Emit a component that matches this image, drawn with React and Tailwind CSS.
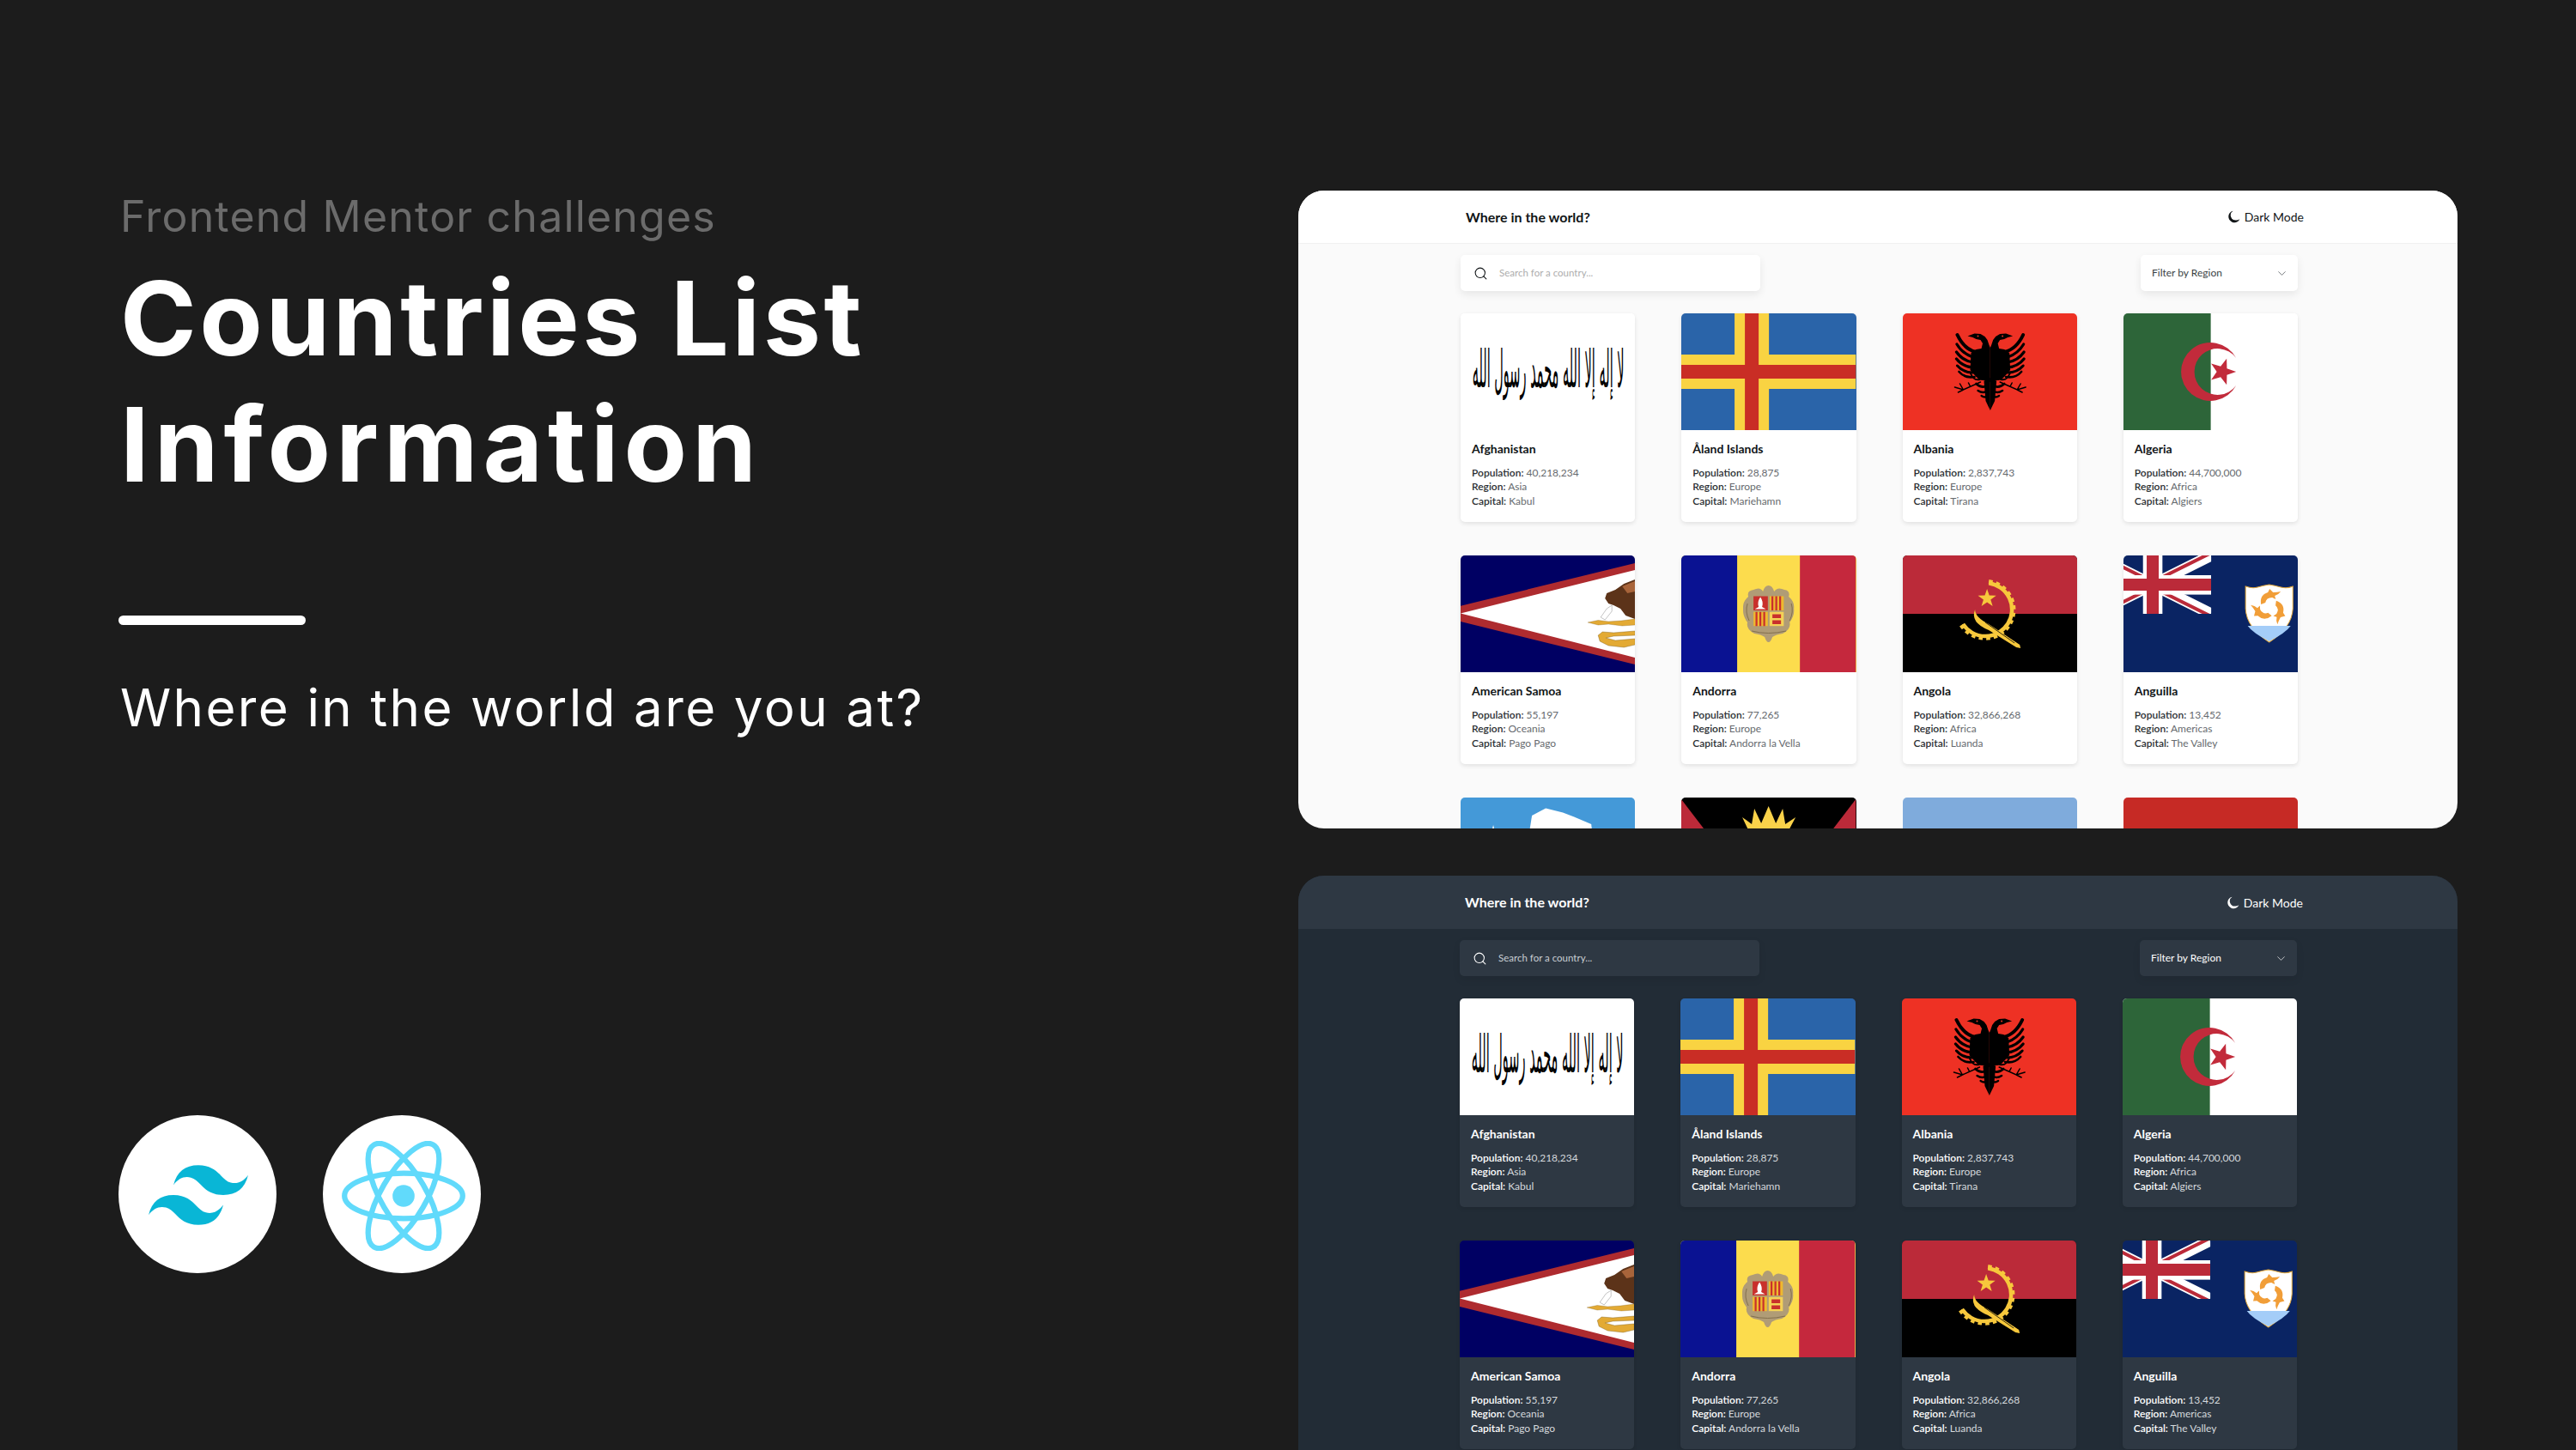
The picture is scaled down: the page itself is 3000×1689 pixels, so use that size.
import React from "react";
import { Search, ChevronDown } from "lucide-react";

const Svg = ({ children, bg }) => (
  <svg viewBox="0 0 203 136" preserveAspectRatio="none" className="block w-full h-[136px]" style={{ background: bg }}>
    {children}
  </svg>
);

const Afghanistan = () => (
  <Svg bg="#ffffff">
    <text fill="#000000" fontFamily="'DejaVu Sans', sans-serif" fontWeight="400" textAnchor="middle" fontSize="14.5" transform="translate(102 86) scale(1 4.2)" direction="rtl">لا إله إلا الله محمد رسول الله</text>
  </Svg>
);

const Aland = () => (
  <Svg bg="#2a64a9">
    <rect x="62" width="40" height="136" fill="#f9d342" />
    <rect y="48" width="203" height="40" fill="#f9d342" />
    <rect x="74" width="16" height="136" fill="#c92d25" />
    <rect y="60" width="203" height="16" fill="#c92d25" />
  </Svg>
);

const half = (
  <>
    <path d="M101.7 40 L103 37 L105 31 L108 27 L113 24 L120 23.5 L124 25 L128 26.5 L122 28 L118 30 L113 31 L110.5 35 L112 41 L118 42 L124 46 L125 66 L118 74 L110 78 L101.7 80 Z" fill="#000" />
    <circle cx="116" cy="26.5" r="1" fill="#ee3124" />
    <g fill="none" stroke="#000" strokeLinecap="round">
      <path d="M118 45 Q132 42 140 25" strokeWidth="4" />
      <path d="M122 51 Q134 47 140.5 36" strokeWidth="3.2" />
      <path d="M122 57 Q134 55 141 45" strokeWidth="3.2" />
      <path d="M122 63 Q134 62 141 53" strokeWidth="3.2" />
      <path d="M122 69 Q133 69 140 61" strokeWidth="3" />
      <path d="M120 74 Q131 76 138 68" strokeWidth="2.6" />
      <path d="M114 77 Q121 79 125 69" strokeWidth="2" />
      <path d="M110 77 Q116 78 119 68" strokeWidth="2" />
      <path d="M104 84 Q112 88 118 82" strokeWidth="2.6" />
      <path d="M104 90 Q110 94 116 90" strokeWidth="2.4" />
      <path d="M104 96 Q108 99 112 96" strokeWidth="2.2" />
      <path d="M113 80 L133 89 L143 86 M133 89 L137 82 M133 89 L139 92 M125 85 L127 81" strokeWidth="1.5" />
    </g>
    <path d="M101.7 75 L109 79 L107 102 L101.7 113 Z" fill="#000" />
  </>
);

const Albania = () => (
  <Svg bg="#ee3124">
    {half}
    <g transform="translate(203.4 0) scale(-1 1)">{half}</g>
  </Svg>
);

const Algeria = () => (
  <Svg bg="#ffffff">
    <rect width="101.5" height="136" fill="#2d6539" />
    <path d="M131 52 A34 34 0 1 0 131 84 A26.9 26.9 0 1 1 131 52 Z" fill="#c22b3b" />
    <polygon points="131,68 120.3,71.8 120,83.2 113,74.2 102,77.4 108.5,68 102,58.6 113,61.8 120,52.8 120.3,64.2" fill="#c22b3b" />
  </Svg>
);

const Samoa = () => (
  <Svg bg="#000063">
    <polygon points="0,58.7 203,9 203,127 0,77" fill="#ae2b2f" />
    <polygon points="0,67.5 203,17 203,119" fill="#ffffff" />
    <path d="M203 28 L190 33 L180 40 L170 44 L168 50 L172 56 L178 58 L186 62 L192 70 L203 74 Z" fill="#5c3319" />
    <path d="M188 36 L200 31 L203 30 L203 42 L194 44 Z" fill="#a8643a" />
    <path d="M176 58 L170 62 L163 72 L168 75 L176 65 Z" fill="#ffffff" stroke="#888888" strokeWidth="0.5" />
    <path d="M148 78 L160 75.5 L172 77 L187 76 L203 74 L203 81 L188 82 L172 80 L160 81 Z" fill="#e3aa34" stroke="#7a5a18" strokeWidth="0.3" />
    <path d="M203 88 L178 90 L165 89 L160 93 L162 100 L172 105 L190 107 L203 104 L203 97 L180 99 L169 96 L178 94 L203 93 Z" fill="#e3aa34" stroke="#7a5a18" strokeWidth="0.4" />
  </Svg>
);

const Andorra = () => (
  <Svg bg="#fcdc4d">
    <rect width="65" height="136" fill="#0a1292" />
    <rect x="138" width="65" height="136" fill="#c5283d" />
    <path d="M84 40 Q92 36 95 42 Q97 35 101.5 35 Q106 35 108 42 Q112 36 120 40 Q127 41 125 48 Q132 54 131 62 Q132 70 126 78 Q128 86 118 91 Q110 92 106 95 Q104 101 101.5 101 Q99 101 97 95 Q93 92 85 91 Q75 86 77 78 Q71 70 72 62 Q71 54 78 48 Q76 41 84 40 Z" fill="#b09c76" />
    <path d="M77 56 Q74 66 79 76 M128 56 Q131 66 126 76 M82 88 Q101 93 122 88" fill="none" stroke="#7d6b4a" strokeWidth="0.9" />
    <rect x="84" y="47.5" width="16.7" height="16.5" fill="#c9302c" />
    <rect x="102.7" y="47.5" width="16.5" height="16.5" fill="#eeb92f" />
    <rect x="84" y="65.7" width="16.7" height="16.5" fill="#eeb92f" />
    <rect x="102.7" y="65.7" width="16.5" height="16.5" fill="#f4d257" />
    <path d="M106 47.5 V64 M110.5 47.5 V64 M115 47.5 V64 M87.5 65.7 V82.2 M92 65.7 V82.2 M96.5 65.7 V82.2" stroke="#c9302c" strokeWidth="2.2" />
    <path d="M92 48.5 Q88 54 90 60 L85.5 62.5 L98.5 62.5 L94 60 Q96 54 92 48.5 Z" fill="#ffffff" />
    <path d="M106 68.5 H116 V73 H106 Z M106 75.5 H116 V80 H106 Z" fill="#c9302c" />
  </Svg>
);

const Angola = () => (
  <Svg bg="#000000">
    <rect width="203" height="68" fill="#bb2a39" />
    <g fill="none" stroke="#f7c83c">
      <path d="M100 32.3 A31 31 0 1 1 70 80" strokeWidth="4.5" />
      <path d="M100 30.5 A33 33 0 1 1 68 81" strokeWidth="5" strokeDasharray="4.5 4" />
    </g>
    <path d="M84 63 Q84 72 100 80 L136 104 L137 108 L132 107 L100 87 Q78 78 84 63 Z" fill="#f7c83c" />
    <path d="M96 78 L130 102" stroke="#000" strokeWidth="0.8" />
    <polygon points="98,39 100.6,46.6 108.6,46.7 102.2,51.5 104.5,59 98,54.5 91.5,59 93.8,51.5 87.4,46.7 95.4,46.6" fill="#f7c83c" />
  </Svg>
);

const Anguilla = () => (
  <Svg bg="#0a2463">
    <svg x="0" y="0" width="102" height="68" viewBox="0 0 102 68">
      <path d="M-34 0 L102 68 M102 0 L-34 68" stroke="#ffffff" strokeWidth="13" />
      <path d="M-34 -3 L34 31 M34 37 L102 71 M102 -3 L34 31 M34 37 L-34 71" stroke="#bb2a39" strokeWidth="4" />
      <rect x="22.7" width="22.6" height="68" fill="#ffffff" />
      <rect y="23" width="102" height="22.6" fill="#ffffff" />
      <rect x="27" width="14" height="68" fill="#bb2a39" />
      <rect y="27" width="102" height="14" fill="#bb2a39" />
    </svg>
    <path d="M142 36 Q150 39 156 37 Q163 35 169.5 34 Q176 35 183 37 Q190 39 197 36 L197 62 Q196 84 169.5 101 Q143 84 142 62 Z" fill="#ffffff" stroke="#e3a93d" strokeWidth="1" />
    <path d="M144.5 82 H194.5 Q189 90 169.5 100 Q150 90 144.5 82 Z" fill="#a4cdf8" />
    <g fill="#f19e38" transform="translate(170 60)">
      {[0, 120, 240].map((r) => (
        <g key={r} transform={`rotate(${r})`}>
          <path d="M-10 -3 Q-12 -14 -2 -17 L0 -21 L4 -17 Q9 -17 13 -18 Q10 -14 6 -13 L7 -9 L3 -11 Q-4 -11 -5 -5 Z" />
        </g>
      ))}
    </g>
  </Svg>
);

const Antarctica = () => (
  <Svg bg="#4499d8">
    <polygon points="80,40 83,21 99,12.5 119,17.5 132,22.5 152,31 153,40" fill="#ffffff" />
    <polygon points="38,32 36,40 40,40" fill="#ffffff" />
  </Svg>
);

const Antigua = () => (
  <Svg bg="#000000">
    <polygon points="0,2 26,36 30,46 0,46" fill="#bb2a39" />
    <polygon points="203,2 177,36 173,46 203,46" fill="#bb2a39" />
    <polygon points="79,40 71,23 82,31 85,13 93,30 101.5,10 110,30 118,13 121,31 133,23 124,40" fill="#fad24a" />
  </Svg>
);

const rowOne = [
  { n: "Afghanistan", p: "40,218,234", r: "Asia", c: "Kabul", F: Afghanistan },
  { n: "Åland Islands", p: "28,875", r: "Europe", c: "Mariehamn", F: Aland },
  { n: "Albania", p: "2,837,743", r: "Europe", c: "Tirana", F: Albania },
  { n: "Algeria", p: "44,700,000", r: "Africa", c: "Algiers", F: Algeria },
  { n: "American Samoa", p: "55,197", r: "Oceania", c: "Pago Pago", F: Samoa },
  { n: "Andorra", p: "77,265", r: "Europe", c: "Andorra la Vella", F: Andorra },
  { n: "Angola", p: "32,866,268", r: "Africa", c: "Luanda", F: Angola },
  { n: "Anguilla", p: "13,452", r: "Americas", c: "The Valley", F: Anguilla },
];

const Moon = ({ color }) => (
  <svg viewBox="0 0 24 24" className="w-[15px] h-[15px]" fill={color}>
    <path d="M10.5 1 A11 11 0 1 0 23 16.5 A12 12 0 0 1 16 18.5 A9.5 9.5 0 0 1 10.5 1 Z" />
  </svg>
);

const Card = ({ c, dark }) => {
  const label = `font-semibold ${dark ? "text-white" : "text-[#2b2f33]"}`;
  return (
    <div className={`rounded-[5px] overflow-hidden h-[243px] shadow-[0_2px_5px_rgba(0,0,0,0.1)] ${dark ? "bg-[#2e3843]" : "bg-white"}`}>
      <c.F />
      <div className="px-[13px] pt-[12px]">
        <div className={`text-[14px] leading-[20px] font-bold ${dark ? "text-white" : "text-[#111517]"}`}>{c.n}</div>
        <div className={`mt-[10px] text-[12px] leading-[16.4px] ${dark ? "text-[#d5d9dd]" : "text-[#666a6e]"}`}>
          <div><span className={label}>Population:</span> {c.p}</div>
          <div><span className={label}>Region:</span> {c.r}</div>
          <div><span className={label}>Capital:</span> {c.c}</div>
        </div>
      </div>
    </div>
  );
};

const Panel = ({ dark }) => (
  <div className={`rounded-[30px] overflow-hidden font-['Lato',sans-serif] ${dark ? "bg-[#222c36] h-[669px] rounded-b-none mt-[55px]" : "bg-[#fafafa] h-[743px]"}`}>
    <div className={`h-[62px] flex items-center justify-between ${dark ? "bg-[#2e3843] pl-[194px] pr-[180px]" : "bg-white border-b border-[#f1f1f1] pl-[195px] pr-[179px]"}`}>
      <div className={`text-[16px] font-bold ${dark ? "text-white" : "text-[#111517]"}`}>Where in the world?</div>
      <div className={`flex items-center gap-[5px] text-[14px] ${dark ? "text-white" : "text-[#111517]"}`}>
        <Moon color={dark ? "#ffffff" : "#111517"} />
        <span>Dark Mode</span>
      </div>
    </div>
    <div className={dark ? "pl-[188px] pr-[187px]" : "pl-[189px] pr-[186px]"}>
      <div className="flex justify-between mt-[13px] h-[42px]">
        <div className={`w-[349px] rounded-[5px] flex items-center pl-[15px] gap-[13px] shadow-[0_4px_10px_rgba(0,0,0,0.08)] ${dark ? "bg-[#2e3843]" : "bg-white"}`}>
          <Search size={17} strokeWidth={1.5} className={dark ? "text-white" : "text-[#111517]"} />
          <span className={`text-[11.5px] ${dark ? "text-[#c9ced3]" : "text-[#adadad]"}`}>Search for a country...</span>
        </div>
        <div className={`w-[183px] rounded-[5px] flex items-center justify-between pl-[13px] pr-[11px] shadow-[0_4px_10px_rgba(0,0,0,0.08)] ${dark ? "bg-[#2e3843] text-white" : "bg-white text-[#3a3f44]"}`}>
          <span className="text-[12px]">Filter by Region</span>
          <ChevronDown size={15} strokeWidth={1.1} />
        </div>
      </div>
      <div className="grid grid-cols-4 gap-x-[54px] gap-y-[39px] mt-[26px]">
        {rowOne.map((c) => <Card key={c.n} c={c} dark={dark} />)}
        {!dark && (
          <>
            <div className="rounded-[5px] overflow-hidden"><Antarctica /></div>
            <div className="rounded-[5px] overflow-hidden"><Antigua /></div>
            <div className="rounded-[5px] overflow-hidden h-[136px] bg-[#7fabdc]" />
            <div className="rounded-[5px] overflow-hidden h-[136px] bg-[#c62a25]" />
          </>
        )}
      </div>
    </div>
  </div>
);

export default function App() {
  return (
    <div className="w-[3000px] h-[1689px] bg-[#1c1c1c] flex overflow-hidden">
      <div className="w-[1512px] pl-[138px] pt-[222px] font-['Inter',sans-serif]">
        <div className="text-[50px] leading-[60px] text-[#6b6b6b] pl-[2px] tracking-[1.2px]">Frontend Mentor challenges</div>
        <h1 className="mt-[15px] text-[120px] leading-[147px] font-bold text-white pl-[2px]">
          <span className="block tracking-[3.6px]">Countries List</span>
          <span className="block tracking-[6px]">Information</span>
        </h1>
        <div className="mt-[126px] w-[218px] h-[11px] rounded-full bg-white" />
        <div className="mt-[61px] text-[60px] leading-[70px] text-white pl-[2px] tracking-[2.4px]">Where in the world are you at?</div>
        <div className="mt-[440px] flex gap-[54px]">
          <div className="w-[184px] h-[184px] rounded-full bg-white flex items-center justify-center">
            <svg viewBox="0 0 54 32.4" className="w-[116px] h-[70px] ml-[2px] mt-[2px]" fill="#09b6d6">
              <path d="M27 0c-7.2 0-11.7 3.6-13.5 10.8 2.7-3.6 5.85-4.95 9.45-4.05 2.054.513 3.522 2.004 5.147 3.653C30.744 13.09 33.808 16.2 40.5 16.2c7.2 0 11.7-3.6 13.5-10.8-2.7 3.6-5.85 4.95-9.45 4.05-2.054-.513-3.522-2.004-5.147-3.653C36.756 3.11 33.692 0 27 0zM13.5 16.2C6.3 16.2 1.8 19.8 0 27c2.7-3.6 5.85-4.95 9.45-4.05 2.054.514 3.522 2.004 5.147 3.653C17.244 29.29 20.308 32.4 27 32.4c7.2 0 11.7-3.6 13.5-10.8-2.7 3.6-5.85 4.95-9.45 4.05-2.054-.513-3.522-2.004-5.147-3.653C23.256 19.31 20.192 16.2 13.5 16.2z" />
            </svg>
          </div>
          <div className="w-[184px] h-[184px] rounded-full bg-white flex items-center justify-center">
            <svg viewBox="-11.5 -10.23 23 20.46" className="w-[144px] h-[128px] ml-[4px] mt-[3px]">
              <circle r="2.05" fill="#61dafb" />
              <g stroke="#61dafb" strokeWidth="1" fill="none">
                <ellipse rx="11" ry="4.2" />
                <ellipse rx="11" ry="4.2" transform="rotate(60)" />
                <ellipse rx="11" ry="4.2" transform="rotate(120)" />
              </g>
            </svg>
          </div>
        </div>
      </div>
      <div className="w-[1350px] pt-[222px]">
        <Panel />
        <Panel dark />
      </div>
    </div>
  );
}
